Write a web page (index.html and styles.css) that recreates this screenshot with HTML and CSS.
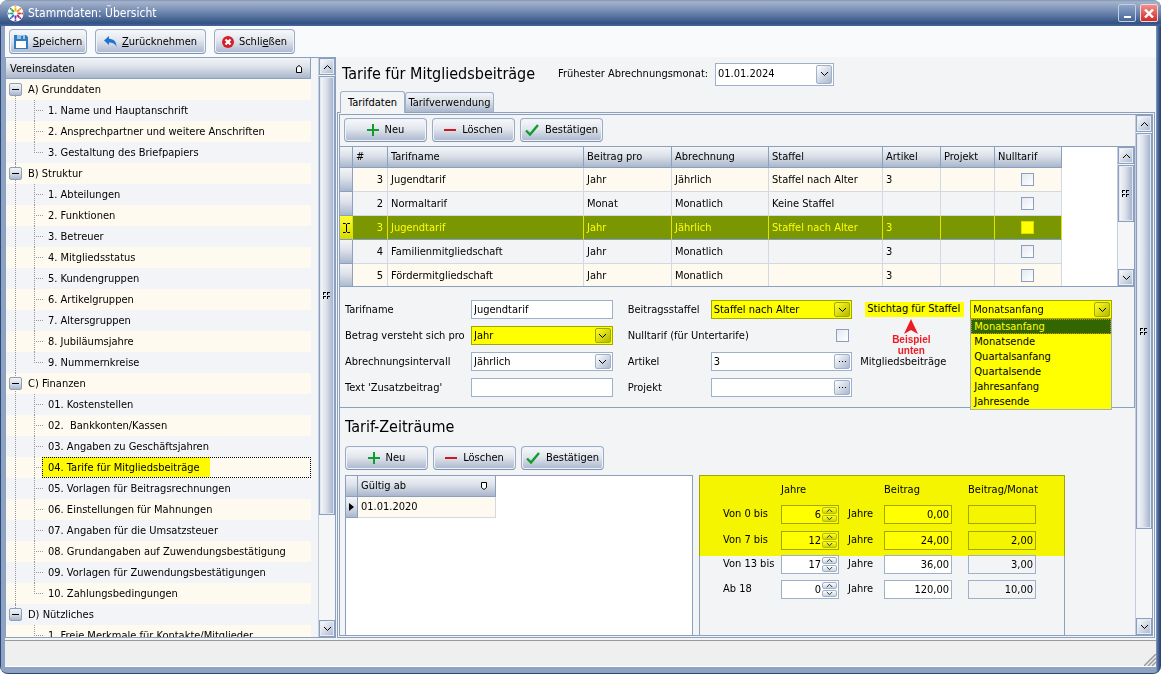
FILE: index.html
```
<!DOCTYPE html>
<html lang="de">
<head>
<meta charset="utf-8">
<title>Stammdaten: Übersicht</title>
<link rel="stylesheet" href="styles.css">
</head>
<body>
<svg class="defs" aria-hidden="true">
  <symbol id="down" viewBox="0 0 9 6"><path d="M1 1l3.500 3.500L8 1" fill="none" stroke="currentColor" stroke-width="1"/></symbol>
  <symbol id="up" viewBox="0 0 9 6"><path d="M1 5l3.500-3.500L8 5" fill="none" stroke="currentColor" stroke-width="1"/></symbol>
  <symbol id="grip" viewBox="0 0 7 7"><path d="M0 0h3v1H1v2H0zM4 0h3v1H5v2H4zM0 4h3v1H1v2H0zM4 4h3v1H5v2H4z"/></symbol>
  <symbol id="plus" viewBox="0 0 12 12"><path d="M6 0v12M0 6h12" stroke="#0f9d2c" stroke-width="2"/></symbol>
  <symbol id="minus" viewBox="0 0 12 12"><path d="M0 6h12" stroke="#d01818" stroke-width="2"/></symbol>
  <symbol id="check" viewBox="0 0 14 12"><path d="M1 6.500l4 4L13 1" fill="none" stroke="#0f9d2c" stroke-width="2.400"/></symbol>
  <symbol id="dots" viewBox="0 0 7 1"><path d="M0 0h1v1H0zM3 0h1v1H3zM6 0h1v1H6z"/></symbol>
</svg>
<div class="window">
  <header class="titlebar">
    <svg width="17" height="17" viewBox="0 0 17 17" aria-hidden="true">
      <circle cx="8.500" cy="8.500" r="8" fill="#fff"/>
      <g fill="none" stroke-width="2" stroke-linecap="round">
        <path d="M8.500 5.500V4" stroke="#f2b705"/><path d="M10.600 6.400l1.300-1.300" stroke="#f08a1c"/><path d="M11.500 8.500H13" stroke="#e2342b"/><path d="M10.600 10.600l1.300 1.300" stroke="#b3207a"/><path d="M8.500 11.500V13" stroke="#6a3aa8"/><path d="M6.400 10.600l-1.300 1.300" stroke="#2467c7"/><path d="M5.500 8.500H4" stroke="#16a0a0"/><path d="M6.400 6.400L5.100 5.100" stroke="#37a53a"/>
      </g>
      <g><circle cx="8.500" cy="1.700" r="1" fill="#f2b705"/><circle cx="13.300" cy="3.700" r="1" fill="#f08a1c"/><circle cx="15.300" cy="8.500" r="1" fill="#e2342b"/><circle cx="13.300" cy="13.300" r="1" fill="#b3207a"/><circle cx="8.500" cy="15.300" r="1" fill="#6a3aa8"/><circle cx="3.700" cy="13.300" r="1" fill="#2467c7"/><circle cx="1.700" cy="8.500" r="1" fill="#16a0a0"/><circle cx="3.700" cy="3.700" r="1" fill="#37a53a"/></g>
    </svg>
    <h1>Stammdaten: Übersicht</h1>
    <button class="winbtn" type="button" aria-label="Minimieren"><svg width="7" height="9" viewBox="0 0 7 9"><path d="M0 7h7v2H0z" fill="#fff"/></svg></button>
    <button class="winbtn close" type="button" aria-label="Fenster schließen"><svg width="10" height="9" viewBox="0 0 10 9"><path d="M1 0.500l8 8M9 0.500l-8 8" stroke="#fff" stroke-width="2.400"/></svg></button>
  </header>

  <nav class="toolbar">
    <button class="btn" type="button"><svg width="14" height="14" viewBox="0 0 14 14"><path d="M0 0h12l2 2v12H0z" fill="#2f7cc0"/><path d="M3 0h8v4H3z" fill="#9cc4e6"/><path d="M7 1h2v3H7z" fill="#2f7cc0"/><path d="M2 6h10v7H2z" fill="#fff"/></svg><span><u>S</u>peichern</span></button>
    <button class="btn undo" type="button"><svg width="13" height="11" viewBox="0 0 13 11"><path d="M0 4.500L5 0v2.800c5 .2 7.500 3 7.500 8C11 7.800 9 6.500 5 6.500V9z" fill="#1d74d0"/></svg><span><u>Z</u>urücknehmen</span></button>
    <button class="btn shut" type="button"><svg width="12" height="12" viewBox="0 0 12 12"><circle cx="6" cy="6" r="6" fill="#d3202a"/><path d="M3.500 3.500l5 5M8.500 3.500l-5 5" stroke="#fff" stroke-width="2.200"/></svg><span>Schli<u>e</u>ßen</span></button>
  </nav>

  <div class="main">
    <aside class="side">
      <div class="treewrap">
        <div class="treehead"><span>Vereinsdaten</span><svg width="6" height="8" viewBox="0 0 6 8"><path d="M.5 7.500v-5L3 .5l2.500 2v5z" fill="#fff" stroke="#000"/></svg></div>
        <ul class="tree">
          <li><div class="grp"><button type="button" class="fold" aria-label="A einklappen"></button>A) Grunddaten</div>
            <ul><li>1. Name und Hauptanschrift</li><li>2. Ansprechpartner und weitere Anschriften</li><li>3. Gestaltung des Briefpapiers</li></ul></li>
          <li><div class="grp"><button type="button" class="fold" aria-label="B einklappen"></button>B) Struktur</div>
            <ul><li>1. Abteilungen</li><li>2. Funktionen</li><li>3. Betreuer</li><li>4. Mitgliedsstatus</li><li>5. Kundengruppen</li><li>6. Artikelgruppen</li><li>7. Altersgruppen</li><li>8. Jubiläumsjahre</li><li>9. Nummernkreise</li></ul></li>
          <li><div class="grp"><button type="button" class="fold" aria-label="C einklappen"></button>C) Finanzen</div>
            <ul><li>01. Kostenstellen</li><li>02. &nbsp;Bankkonten/Kassen</li><li>03. Angaben zu Geschäftsjahren</li><li class="sel"><span class="focus"><mark>04. Tarife für Mitgliedsbeiträge</mark></span></li><li>05. Vorlagen für Beitragsrechnungen</li><li>06. Einstellungen für Mahnungen</li><li>07. Angaben für die Umsatzsteuer</li><li>08. Grundangaben auf Zuwendungsbestätigung</li><li>09. Vorlagen für Zuwendungsbestätigungen</li><li>10. Zahlungsbedingungen</li></ul></li>
          <li><div class="grp"><button type="button" class="fold" aria-label="D einklappen"></button>D) Nützliches</div>
            <ul><li>1. Freie Merkmale für Kontakte/Mitglieder</li></ul></li>
        </ul>
      </div>
      <div class="scroll tree-scroll">
        <button type="button" aria-label="Nach oben"><svg width="9" height="6"><use href="#up"/></svg></button>
        <div class="thumb"><svg width="7" height="7"><use href="#grip"/></svg></div><div class="track"></div>
        <button type="button" aria-label="Nach unten"><svg width="9" height="6"><use href="#down"/></svg></button>
      </div>
    </aside>

    <main class="content">
      <div class="head">
        <h2>Tarife für Mitgliedsbeiträge</h2>
        <label for="monat">Frühester Abrechnungsmonat:</label>
        <span class="combo date"><input id="monat" type="text" value="01.01.2024"><button type="button" class="drop" aria-label="Kalender"><svg width="9" height="6"><use href="#down"/></svg></button></span>
      </div>
      <div class="tabs" role="tablist">
        <button type="button" role="tab" aria-selected="true" class="tab active">Tarifdaten</button>
        <button type="button" role="tab" aria-selected="false" class="tab">Tarifverwendung</button>
      </div>
      <div class="page">
        <div class="inner">
          <div class="actions">
            <button class="btn" type="button"><svg width="12" height="12"><use href="#plus"/></svg>Neu</button>
            <button class="btn" type="button"><svg width="12" height="12"><use href="#minus"/></svg>Löschen</button>
            <button class="btn" type="button"><svg width="14" height="12"><use href="#check"/></svg>Bestätigen</button>
          </div>
          <div class="gridwrap">
            <table class="grid">
              <colgroup><col class="c0"><col class="c1"><col class="c2"><col class="c3"><col class="c4"><col class="c5"><col class="c6"><col class="c7"><col class="c8"></colgroup>
              <thead><tr><th></th><th>#</th><th>Tarifname</th><th>Beitrag pro</th><th>Abrechnung</th><th>Staffel</th><th>Artikel</th><th>Projekt</th><th>Nulltarif</th></tr></thead>
              <tbody>
                <tr><td class="ind"></td><td class="num">3</td><td>Jugendtarif</td><td>Jahr</td><td>Jährlich</td><td>Staffel nach Alter</td><td>3</td><td></td><td class="chk"><input type="checkbox" aria-label="Nulltarif"></td></tr>
                <tr><td class="ind"></td><td class="num">2</td><td>Normaltarif</td><td>Monat</td><td>Monatlich</td><td>Keine Staffel</td><td></td><td></td><td class="chk"><input type="checkbox" aria-label="Nulltarif"></td></tr>
                <tr class="current"><td class="ind"><svg width="7" height="10" viewBox="0 0 7 10"><path d="M0 .5h2.500l1 1 1-1H7M0 9.500h2.500l1-1 1 1H7M3.500 1v8" fill="none" stroke="#000"/></svg></td><td class="num">3</td><td>Jugendtarif</td><td>Jahr</td><td>Jährlich</td><td>Staffel nach Alter</td><td>3</td><td></td><td class="chk"><input type="checkbox" aria-label="Nulltarif"></td></tr>
                <tr><td class="ind"></td><td class="num">4</td><td>Familienmitgliedschaft</td><td>Jahr</td><td>Monatlich</td><td></td><td>3</td><td></td><td class="chk"><input type="checkbox" aria-label="Nulltarif"></td></tr>
                <tr><td class="ind"></td><td class="num">5</td><td>Fördermitgliedschaft</td><td>Jahr</td><td>Monatlich</td><td></td><td>3</td><td></td><td class="chk"><input type="checkbox" aria-label="Nulltarif"></td></tr>
              </tbody>
            </table>
            <div class="scroll grid-scroll">
              <button type="button" aria-label="Nach oben"><svg width="9" height="6"><use href="#up"/></svg></button>
              <div class="thumb"><svg width="7" height="7"><use href="#grip"/></svg></div><div class="track"></div>
              <button type="button" aria-label="Nach unten"><svg width="9" height="6"><use href="#down"/></svg></button>
            </div>
          </div>

          <form class="form">
            <label for="f1">Tarifname</label>
            <input id="f1" class="box" type="text" value="Jugendtarif">
            <label for="f2" class="mid">Beitragsstaffel</label>
            <span class="combo hot"><select id="f2"><option>Staffel nach Alter</option></select><span class="drop"><svg width="9" height="6"><use href="#down"/></svg></span></span>
            <div class="right note-anchor"><label for="f3"><mark>Stichtag für Staffel</mark></label>
              <div class="note"><svg width="14" height="15" viewBox="0 0 14 15"><path d="M7 0l7 15-7-4-7 4z" fill="#ed1c24"/></svg><span>Beispiel<br>unten</span></div></div>
            <div class="open">
              <span class="combo hot"><select id="f3"><option>Monatsanfang</option></select><span class="drop"><svg width="9" height="6"><use href="#down"/></svg></span></span>
              <ul class="menu" role="listbox" aria-label="Stichtag für Staffel"><li role="option" aria-selected="true">Monatsanfang</li><li role="option">Monatsende</li><li role="option">Quartalsanfang</li><li role="option">Quartalsende</li><li role="option">Jahresanfang</li><li role="option">Jahresende</li></ul>
            </div>

            <label for="f4">Betrag versteht sich pro</label>
            <span class="combo hot"><select id="f4"><option>Jahr</option></select><span class="drop"><svg width="9" height="6"><use href="#down"/></svg></span></span>
            <div class="mid pair"><label for="f5">Nulltarif (für Untertarife)</label><input id="f5" type="checkbox"></div>
            <span class="fill"></span>

            <label for="f6">Abrechnungsintervall</label>
            <span class="combo"><select id="f6"><option>Jährlich</option></select><span class="drop"><svg width="9" height="6"><use href="#down"/></svg></span></span>
            <label for="f7" class="mid">Artikel</label>
            <span class="combo"><input id="f7" type="text" value="3"><button type="button" class="drop" aria-label="Artikel wählen"><svg width="7" height="1"><use href="#dots"/></svg></button></span>
            <span class="group">Mitgliedsbeiträge</span>

            <label for="f8">Text 'Zusatzbeitrag'</label>
            <input id="f8" class="box" type="text">
            <label for="f9" class="mid">Projekt</label>
            <span class="combo"><input id="f9" type="text"><button type="button" class="drop" aria-label="Projekt wählen"><svg width="7" height="1"><use href="#dots"/></svg></button></span>
          </form>

          <h2 class="sub">Tarif-Zeiträume</h2>
          <div class="actions second">
            <button class="btn" type="button"><svg width="12" height="12"><use href="#plus"/></svg>Neu</button>
            <button class="btn" type="button"><svg width="12" height="12"><use href="#minus"/></svg>Löschen</button>
            <button class="btn" type="button"><svg width="14" height="12"><use href="#check"/></svg>Bestätigen</button>
          </div>
          <div class="lower">
            <div class="periods">
              <table class="grid">
                <colgroup><col class="p0"><col class="p1"></colgroup>
                <thead><tr><th></th><th><div class="sorted">Gültig ab<svg width="6" height="8" viewBox="0 0 6 8"><path d="M.5.5h5v5L3 7.500.5 5.500z" fill="#fff" stroke="#000"/></svg></div></th></tr></thead>
                <tbody><tr><td class="ind"><svg width="5" height="8" viewBox="0 0 5 8"><path d="M0 0l5 4-5 4z"/></svg></td><td>01.01.2020</td></tr></tbody>
              </table>
            </div>
            <div class="ages">
              <div class="zone lit">
                <div class="agerow titles"><span></span><span>Jahre</span><span></span><span>Beitrag</span><span>Beitrag/Monat</span></div>
                <div class="agerow"><label for="a1">Von 0 bis</label><span class="spin"><input id="a1" type="text" value="6"><span><button type="button" aria-label="Mehr"><svg width="7" height="5"><use href="#up"/></svg></button><button type="button" aria-label="Weniger"><svg width="7" height="5"><use href="#down"/></svg></button></span></span><span class="unit">Jahre</span><input class="box" type="text" aria-label="Beitrag" value="0,00"><input class="box ro" type="text" aria-label="Beitrag pro Monat" readonly></div>
                <div class="agerow"><label for="a2">Von 7 bis</label><span class="spin"><input id="a2" type="text" value="12"><span><button type="button" aria-label="Mehr"><svg width="7" height="5"><use href="#up"/></svg></button><button type="button" aria-label="Weniger"><svg width="7" height="5"><use href="#down"/></svg></button></span></span><span class="unit">Jahre</span><input class="box" type="text" aria-label="Beitrag" value="24,00"><input class="box ro" type="text" aria-label="Beitrag pro Monat" value="2,00" readonly></div>
              </div>
              <div class="zone">
                <div class="agerow"><label for="a3">Von 13 bis</label><span class="spin"><input id="a3" type="text" value="17"><span><button type="button" aria-label="Mehr"><svg width="7" height="5"><use href="#up"/></svg></button><button type="button" aria-label="Weniger"><svg width="7" height="5"><use href="#down"/></svg></button></span></span><span class="unit">Jahre</span><input class="box" type="text" aria-label="Beitrag" value="36,00"><input class="box ro" type="text" aria-label="Beitrag pro Monat" value="3,00" readonly></div>
                <div class="agerow"><label for="a4">Ab 18</label><span class="spin"><input id="a4" type="text" value="0"><span><button type="button" aria-label="Mehr"><svg width="7" height="5"><use href="#up"/></svg></button><button type="button" aria-label="Weniger"><svg width="7" height="5"><use href="#down"/></svg></button></span></span><span class="unit">Jahre</span><input class="box" type="text" aria-label="Beitrag" value="120,00"><input class="box ro" type="text" aria-label="Beitrag pro Monat" value="10,00" readonly></div>
              </div>
            </div>
          </div>
        </div>
        <div class="scroll page-scroll">
          <button type="button" aria-label="Nach oben"><svg width="9" height="6"><use href="#up"/></svg></button>
          <div class="thumb"><svg width="7" height="7"><use href="#grip"/></svg></div><div class="track"></div>
          <button type="button" aria-label="Nach unten"><svg width="9" height="6"><use href="#down"/></svg></button>
        </div>
      </div>
    </main>
  </div>
  <footer class="status"><svg width="12" height="12" viewBox="0 0 12 12" aria-hidden="true"><path d="M0 12L12 0M4 12l8-8M8 12l4-4" stroke="#9a9a9a" stroke-width="1.500"/></svg></footer>
</div>
</body>
</html>
```

FILE: styles.css
```
:root {
  --line: #8ba0bf;
  --grad: linear-gradient(#f2f4f7, #dce1e9 45%, #a9b6cc);
  --panel: #f3f4f6;
  --cream: #fffaef;
  --hot: #ffff00;
  --hotline: #9fa800;
}
* { box-sizing: border-box; }
body { margin: 0; background: #fff; color: #000; font: 11px/14px "DejaVu Sans Condensed", Tahoma, "DejaVu Sans", sans-serif; }
button, input, select { font: inherit; color: inherit; margin: 0; }
h1, h2, ul { margin: 0; padding: 0; font-weight: normal; }
ul { list-style: none; }
svg { display: block; flex: none; }
mark { background: var(--hot); color: inherit; }
.defs { position: absolute; width: 0; height: 0; }

.window {
  height: 100vh; display: flex; flex-direction: column; overflow: hidden;
  border-radius: 8px; padding: 0 5px 6px;
  background: linear-gradient(90deg, #2a4775 0 1px, #8ea3c4 1px 5px, #8ea3c4 calc(100% - 5px), #5f7dab calc(100% - 4px), #2a4775 calc(100% - 1px));
  border-bottom: 1px solid #2a4775;
}
.titlebar {
  display: flex; align-items: center; gap: 4px; height: 26px; flex: none;
  margin: 0 -5px; padding: 0 3px 0 7px; color: #fff;
  background: linear-gradient(#8396b5, #a3b3cc 2px, #8a9dbd 7px, #5f7aa6 15px, #335283 23px, #46669a);
}
.titlebar h1 { flex: 1; font-size: 12px; line-height: 16px; }
.winbtn {
  width: 18px; height: 18px; padding: 0; display: grid; place-items: center;
  border: 1px solid #c3d0e2; border-radius: 2px; background: linear-gradient(#8fa5c8, #456699);
}
.winbtn.close { background: linear-gradient(#f0918c, #cf2b2b); border-color: #f4d6d6; }

.toolbar { display: flex; align-items: flex-start; gap: 8px; flex: none; height: 31px; padding: 3px 4px; background: #f9fafc; }
.btn {
  height: 24px; padding: 0 5px; display: inline-flex; align-items: center; justify-content: center; gap: 5px;
  border: 1px solid #9bacc6; border-bottom-color: #7f93b4; border-radius: 4px;
  background: linear-gradient(#f6f8fa, #e2e6ed 45%, #a9b6cd); box-shadow: inset 0 0 0 1px #f0f3f7;
  white-space: nowrap;
}
.toolbar .btn { height: 25px; width: 78px; }
.toolbar .undo { width: 111px; }
.toolbar .shut { width: 81px; }

.main { flex: 1; min-height: 0; display: flex; gap: 1px; background: var(--panel); padding-bottom: 2px; }
.side { width: 331px; flex: none; display: flex; border: 1px solid var(--line); background: var(--panel); }
.treewrap { flex: 1; min-width: 0; overflow: hidden; padding-right: 7px; }
.treehead {
  height: 21px; display: flex; align-items: center; justify-content: space-between; padding: 2px 8px 0 4px;
  background: var(--grad); border-right: 1px solid var(--line); border-bottom: 1px solid var(--line);
}
.tree { background: repeating-linear-gradient(var(--cream) 0 21px, #f3f4f7 21px 42px); }
.tree > li { position: relative; }
.tree > li::before { content: ""; position: absolute; left: 9px; top: 0; bottom: 0; border-left: 1px dotted #999; }
.tree > li:first-child::before { top: 10px; }
.tree > li:last-child::before { bottom: auto; height: 10px; }
.grp { display: flex; align-items: center; gap: 6px; height: 21px; padding-left: 3px; }
.fold { position: relative; width: 13px; height: 13px; padding: 0; border: 1px solid var(--line); border-radius: 2px; background: var(--grad); }
.fold::before { content: ""; display: block; width: 7px; height: 1px; margin: 0 auto; background: #000; }
.tree ul li { position: relative; height: 21px; padding: 4px 0 3px 42px; line-height: 14px; white-space: nowrap; }
.tree ul li::before { content: ""; position: absolute; left: 28px; top: 0; bottom: 0; border-left: 1px dotted #999; }
.tree ul li:last-child::before { bottom: 10px; }
.tree ul li::after { content: ""; position: absolute; left: 28px; top: 10px; width: 9px; border-top: 1px dotted #999; }
.tree ul .sel { padding: 0 0 0 36px; }
.focus { display: block; height: 21px; outline: 1px dotted #000; outline-offset: -1px; }
.focus mark { display: inline-block; height: 20px; padding: 4px 10px 2px 6px; background: var(--hot); mix-blend-mode: multiply; }

.scroll { width: 17px; flex: none; display: flex; flex-direction: column; gap: 1px; border-left: 1px solid #c3cddb; background: #f5f6f8; }
.scroll button {
  height: 17px; flex: none; padding: 0; display: grid; place-items: center;
  border: 1px solid var(--line); background: linear-gradient(135deg, #fff, #a9b7ce); box-shadow: inset 0 0 0 1px #e7ebf2;
}
.thumb { display: grid; place-items: center; border: 1px solid var(--line); background: linear-gradient(90deg, #f6f8fa, #dbe1ea 45%, #9dadc8); box-shadow: inset 0 0 0 1px #e3e8f0; }
.thumb svg { shape-rendering: crispEdges; }
.scroll .thumb { padding-right: 1px; }
.tree-scroll .thumb { flex: 81; } .tree-scroll .track { flex: 19; }
.page-scroll .thumb { flex: 82; } .page-scroll .track { flex: 18; }
.grid-scroll .thumb { flex: 57; } .grid-scroll .track { flex: 46; }

.content { flex: 1; min-width: 0; display: flex; flex-direction: column; padding-right: 1px; }
.head { display: flex; align-items: center; height: 34px; flex: none; padding-left: 5px; }
h2 { font-size: 16px; line-height: 20px; white-space: nowrap; }
.head h2 { width: 216px; }
.head label { width: 157px; white-space: nowrap; }
.combo { display: flex; align-items: stretch; height: 19px; min-width: 0; background: #fff; border: 1px solid #9fb0ca; padding: 1px; }
.combo input, .combo select { flex: 1; min-width: 0; width: 0; border: 0; padding: 0 1px; background: none; appearance: none; outline: 0; }
.combo.date { width: 119px; height: 23px; padding: 1px; }
.combo .drop {
  width: 16px; flex: none; padding: 0; display: grid; place-items: center; pointer-events: none;
  border: 1px solid #9fb0ca; border-radius: 2px; background: linear-gradient(135deg, #fff, #a9b7ce);
}
.combo.hot { background: var(--hot); border-color: var(--hotline); }
.combo.hot .drop { background: linear-gradient(135deg, #ffff20, #b4b800); border-color: var(--hotline); }

.tabs { display: flex; align-items: flex-end; height: 21px; flex: none; padding-left: 3px; }
.tab { height: 20px; padding: 0 2px; border: 1px solid #9fb0ca; border-bottom: 0; border-radius: 3px 3px 0 0; background: var(--grad); white-space: nowrap; width: 89px; }
.tab.active { position: relative; z-index: 1; width: 65px; height: 22px; margin-bottom: -1px; background: var(--panel); }
.page { flex: 1; min-height: 0; display: flex; border: 3px double var(--line); }
.inner { flex: 1; min-width: 0; display: flex; flex-direction: column; overflow: hidden; }
.actions { display: flex; gap: 5px; height: 31px; flex: none; padding: 3px 4px; }
.actions .btn { width: 83px; gap: 6px; }
.gridwrap { display: flex; justify-content: space-between; height: 141px; flex: none; overflow: hidden; background: #fff; border: 1px solid var(--line); border-left: 0; }
.grid { table-layout: fixed; border-collapse: separate; border-spacing: 0; width: 722px; height: max-content; }
.c0 { width: 13px; } .c1 { width: 35px; } .c2 { width: 196px; } .c3 { width: 88px; } .c4 { width: 97px; }
.c5 { width: 114px; } .c6 { width: 58px; } .c7 { width: 54px; } .c8 { width: 67px; }
.grid th { height: 21px; padding: 0 4px 0 3px; font-weight: normal; text-align: left; background: var(--grad); border-right: 1px solid var(--line); border-bottom: 1px solid var(--line); white-space: nowrap; }
.grid td { height: 24px; padding: 0 4px 0 3px; border-right: 1px solid #d3d9e3; border-bottom: 1px solid #d3d9e3; background: #f3f4f6; white-space: nowrap; }
.grid tbody tr:nth-child(odd) td { background: var(--cream); }
.grid td.num { text-align: right; }
.grid td.chk { text-align: center; }
.grid td.ind, .grid tbody tr:nth-child(odd) td.ind { padding: 0; background: var(--grad); border-color: var(--line); }
.ind svg { margin: 0 auto; }
.grid tbody .current td, .grid tbody tr.current:nth-child(odd) td { background: #7a9600; color: var(--hot); border-right-color: #dfe300; border-bottom-color: #7a9ada; }
.grid tbody tr.current:nth-child(odd) td.ind { background: linear-gradient(#ffff30, #d6d900); }
input[type="checkbox"] { appearance: none; width: 13px; height: 13px; display: block; border: 1px solid #8ba0bf; background: linear-gradient(135deg, #e4e9f0, #fff); }
.chk input { margin: 0 auto; }
.current input[type="checkbox"] { border-color: #d9dc00; background: var(--hot); }

.form {
  display: grid; grid-template-columns: 126px 1fr 98px 1fr 118px 1fr; gap: 7px 0; flex: none;
  padding: 13px 22px 10px 5px; border: 1px solid var(--line); border-top: 0; border-left: 0; align-items: center;
}
.box { height: 19px; min-width: 0; width: 100%; border: 1px solid #9fb0ca; padding: 0 2px; background: #fff; border-radius: 0; outline: 0; }
.form label { white-space: nowrap; }
.mid { padding-left: 15px; }
.pair { grid-column: span 2; display: flex; justify-content: space-between; align-items: center; padding-right: 3px; height: 19px; }
.fill { grid-column: span 2; }
.right { padding-left: 13px; }
.right mark { display: inline-block; padding: 0 4px 1px 2px; }
.group { grid-column: span 2; padding-left: 8px; }
.note-anchor, .open { position: relative; }
.note { position: absolute; top: 17px; left: 0; right: 0; display: flex; flex-direction: column; align-items: center; color: #ed1c24; font: bold 10px/11px "Liberation Sans", Arial, sans-serif; text-align: center; }
.menu { position: absolute; z-index: 2; top: 19px; left: 0; right: 0; background: var(--hot); border: 1px solid #9fb0ca; border-top: 0; }
.menu li { height: 15px; padding: 0 3px; line-height: 15px; }
.menu [aria-selected="true"] { background: #336600; color: var(--hot); outline: 1px dotted #cc9900; outline-offset: -1px; }

.sub { padding: 9px 0 5px 5px; flex: none; height: 34px; }
.actions.second { padding: 4px 5px; height: 33px; }
.lower { flex: 1; min-height: 0; display: flex; gap: 6px; padding-left: 5px; }
.periods { width: 348px; flex: none; border: 1px solid var(--line); border-bottom: 0; background: #fff; }
.periods .grid { width: 150px; }
.p0 { width: 12px; } .p1 { width: 138px; }
.periods .grid td { height: 21px; }
.sorted { display: flex; justify-content: space-between; align-items: center; padding-right: 4px; }
.ages { width: 366px; flex: none; border: 1px solid var(--line); border-bottom: 0; }
.zone.lit { margin: -1px; padding: 1px 0 6px; background: #f5f500; border: solid var(--hotline); border-width: 1px 1px 0; }
.agerow { display: grid; grid-template-columns: 58px 58px 45px 68px 68px; column-gap: 0; height: 25px; padding-left: 23px; align-items: start; }
.agerow > :last-child { margin-left: 16px; }
.lit .agerow:nth-child(2) { height: 26px; }
.lit .agerow:last-child { height: 19px; }
.agerow label, .agerow .unit { line-height: 17px; white-space: nowrap; }
.unit { padding-left: 9px; }
.titles { padding-top: 6px; height: 28px; white-space: nowrap; }
.agerow .box { text-align: right; width: 68px; }
.agerow .ro { background: transparent; }
.spin { display: flex; height: 19px; border: 1px solid #9fb0ca; background: #fff; padding: 1px 1px 1px 0; }
.spin input { flex: 1; width: 0; min-width: 0; border: 0; padding: 0 1px; background: none; text-align: right; outline: 0; }
.spin > span { width: 15px; display: flex; flex-direction: column; gap: 1px; }
.spin button { flex: 1; min-height: 0; padding: 0; display: grid; place-items: center; border: 1px solid #9fb0ca; border-radius: 2px; background: linear-gradient(#fff, #c9d2e0); }
.lit .box, .lit .spin { background: var(--hot); border-color: var(--hotline); }
.lit .ro { background: transparent; }
.lit .spin button { background: linear-gradient(#ffff30, #d0d400); border-color: #b8bc00; }

.status { height: 27px; flex: none; display: flex; justify-content: flex-end; align-items: flex-end; border-top: 1px solid #9a9a9a; background: #efefef; border-bottom: 1px solid #fff; }
```
